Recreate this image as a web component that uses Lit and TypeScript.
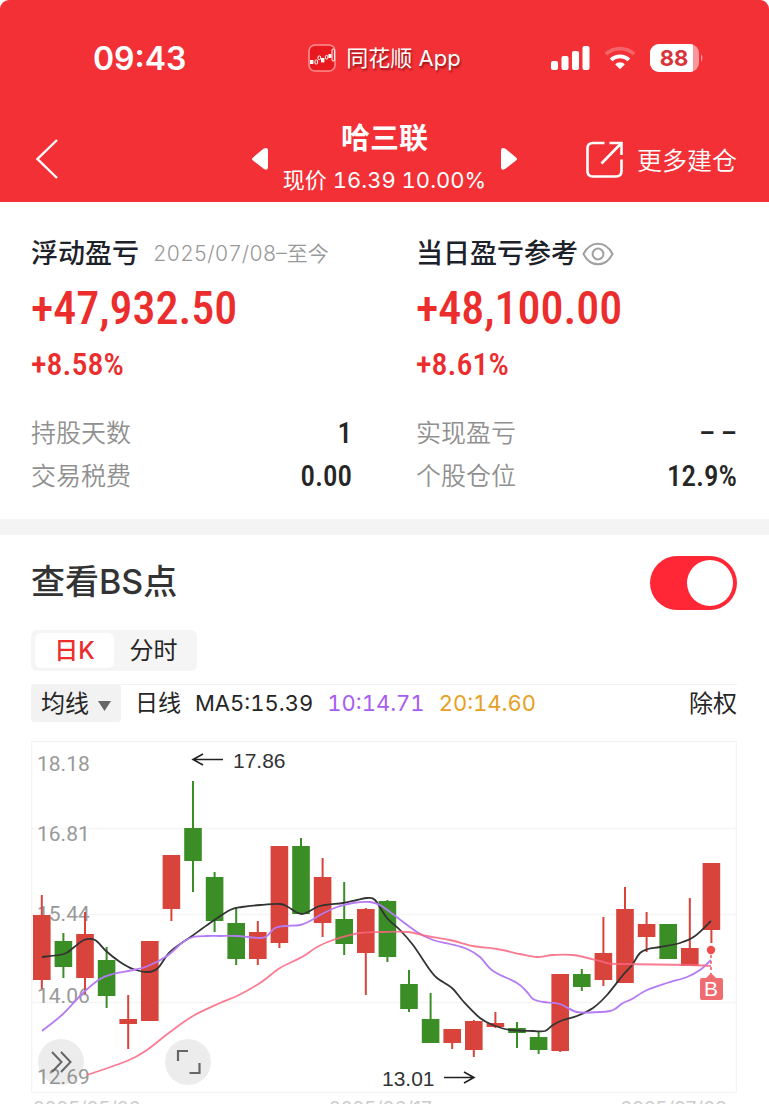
import { LitElement, html, svg, css } from "lit";
import { customElement, property, state } from "lit/decorators.js";
import { classMap } from "lit/directives/class-map.js";

type Point = [number, number];
type Candle = { up: boolean; high: number; top: number; bottom: number; low: number };

const c = (kind: "r" | "g", high: number, top: number, bottom: number, low: number): Candle => ({
  up: kind === "r",
  high,
  top,
  bottom,
  low,
});

const CANDLES: Candle[] = [
  c("r", 154, 174, 239, 248),
  c("g", 192, 200, 226, 237),
  c("r", 171, 193, 237, 253),
  c("g", 206, 219, 255, 267),
  c("r", 254, 278, 283, 308),
  c("r", 200, 200, 280, 280),
  c("r", 114, 114, 168, 180),
  c("g", 40, 87, 120, 151),
  c("g", 131, 136, 180, 191),
  c("g", 166, 182, 218, 224),
  c("r", 180, 191, 218, 224),
  c("r", 105, 105, 202, 207),
  c("g", 97, 105, 173, 173),
  c("r", 117, 136, 182, 196),
  c("g", 141, 178, 203, 214),
  c("r", 167, 168, 212, 254),
  c("g", 159, 160, 216, 221),
  c("g", 229, 243, 268, 271),
  c("g", 252, 278, 302, 302),
  c("r", 288, 288, 302, 308),
  c("r", 279, 280, 309, 316),
  c("r", 271, 282, 286, 287),
  c("g", 281, 287, 292, 307),
  c("g", 291, 296, 309, 313),
  c("r", 233, 233, 310, 311),
  c("g", 228, 233, 246, 250),
  c("r", 176, 212, 239, 245),
  c("r", 146, 168, 242, 242),
  c("r", 171, 183, 196, 211),
  c("g", 183, 183, 218, 218),
  c("r", 157, 207, 225, 225),
  c("r", 122, 122, 189, 202),
];

const MA5: Point[] = [
  [42, 957], [64, 954], [73, 948], [84, 940], [95, 940], [106, 951], [120, 962], [133, 969],
  [148, 972], [158, 968], [170, 952], [192, 936], [210, 923], [230, 910], [242, 907], [260, 905],
  [280, 904], [288, 907], [302, 914], [320, 906], [343, 903], [357, 900], [367, 898], [375, 900],
  [387, 918], [400, 930], [413, 945], [430, 970], [437, 978], [452, 988], [463, 1001], [480, 1018],
  [493, 1025], [510, 1030], [533, 1031], [545, 1031], [553, 1025], [563, 1020], [577, 1016],
  [593, 1008], [607, 995], [623, 975], [632, 965], [640, 953], [648, 949], [660, 947], [680, 943],
  [695, 936], [711, 921],
];

const MA10: Point[] = [
  [42, 1031], [63, 1014], [83, 993], [100, 979], [113, 974], [133, 970], [148, 966], [167, 956],
  [183, 942], [193, 937], [207, 936], [220, 936], [237, 936], [260, 938], [267, 936], [275, 928],
  [285, 926], [300, 925], [310, 921], [320, 915], [337, 907], [353, 903], [370, 902], [380, 905],
  [390, 912], [417, 932], [433, 940], [450, 944], [467, 949], [480, 957], [493, 971], [517, 983],
  [527, 992], [533, 999], [543, 1002], [560, 1004], [577, 1012], [600, 1012], [610, 1011],
  [615, 1009], [623, 1003], [632, 999], [647, 990], [667, 983], [687, 977], [700, 970], [711, 960],
];

const MA20: Point[] = [
  [87, 1075], [127, 1061], [147, 1050], [170, 1032], [193, 1016], [220, 1003], [237, 996],
  [260, 983], [280, 968], [302, 957], [317, 947], [333, 940], [360, 933], [383, 932], [408, 932],
  [427, 936], [450, 940], [473, 946], [497, 949], [520, 954], [537, 957], [553, 955], [573, 955],
  [600, 961], [607, 963], [620, 964], [690, 965], [711, 966],
];

const smooth = (pts: Point[]): string => {
  let d = `M${pts[0][0]} ${pts[0][1]}`;
  for (let i = 0; i < pts.length - 1; i++) {
    const p0 = pts[Math.max(0, i - 1)];
    const p1 = pts[i];
    const p2 = pts[i + 1];
    const p3 = pts[Math.min(pts.length - 1, i + 2)];
    d += `C${p1[0] + (p2[0] - p0[0]) / 6} ${p1[1] + (p2[1] - p0[1]) / 6} ${
      p2[0] - (p3[0] - p1[0]) / 6
    } ${p2[1] - (p3[1] - p1[1]) / 6} ${p2[0]} ${p2[1]}`;
  }
  return d;
};

@customElement("status-bar")
class StatusBar extends LitElement {
  static styles = css`
    :host {
      display: grid;
      grid-template-columns: 1fr auto 1fr;
      align-items: center;
      height: 116px;
      padding: 0 65px;
      color: #fff;
    }
    .time {
      padding-left: 28px;
      font-size: 32px;
      font-weight: 600;
    }
    .app {
      display: flex;
      align-items: center;
      gap: 10px;
      font-size: 22px;
      line-height: 24px;
      text-shadow: 1px 2px 2px rgba(90, 0, 0, 0.6);
    }
    .system {
      display: flex;
      justify-content: flex-end;
      align-items: center;
      gap: 14px;
    }
    svg {
      display: block;
    }
    .battery-text {
      font-size: 22px;
      font-weight: 700;
      fill: #d8343a;
    }
  `;
  render() {
    return html`
      <span class="time">09:43</span>
      <span class="app">
        <svg width="28" height="28" viewBox="0 0 28 28" aria-hidden="true">
          <rect x="1" y="1" width="26" height="26" rx="6" fill="#e8191f" stroke="#ff8f90" stroke-width="1.6" />
          <g fill="#fff">
            <rect x="2" y="16" width="3.4" height="4" />
            <rect x="13" y="14" width="3.4" height="4.4" />
            <rect x="20.4" y="10" width="3" height="4" />
          </g>
          <g fill="none" stroke="#fff">
            <rect x="7" y="16" width="2.6" height="4" rx="1" />
            <rect x="10" y="12" width="2.6" height="3.6" rx="1" />
            <rect x="17.4" y="11.5" width="2.4" height="3.6" rx="1" />
            <rect x="24" y="5" width="2.4" height="12" rx="1" />
          </g>
        </svg>
        <span>同花顺 App</span>
      </span>
      <span class="system">
        <svg width="39" height="26" viewBox="0 0 39 26" fill="#fff" aria-hidden="true">
          <rect x="0" y="16" width="7" height="9" rx="2" />
          <rect x="10.5" y="11" width="7" height="14" rx="2" />
          <rect x="21" y="6" width="7" height="19" rx="2" />
          <rect x="31.5" y="1" width="7" height="24" rx="2" />
        </svg>
        <svg width="32" height="26" viewBox="0 0 34 26" aria-hidden="true">
          <g fill="none" stroke="#fff" stroke-width="4">
            <path d="M2 9 A22 22 0 0 1 32 9" opacity="0.25" />
            <path d="M7.500 15 A14 14 0 0 1 26.500 15" />
          </g>
          <path d="M17 25 L11.800 19.600 A7.600 7.600 0 0 1 22.200 19.600 Z" fill="#fff" />
        </svg>
        <svg width="54" height="28" viewBox="0 0 54 28" role="img" aria-label="88%">
          <clipPath id="cell"><rect width="49" height="28" rx="9" /></clipPath>
          <g clip-path="url(#cell)">
            <rect width="49" height="28" fill="#fff" opacity="0.5" />
            <rect width="43" height="28" fill="#fff" />
          </g>
          <path d="M51 10 Q54 14 51 18 Z" fill="#fff" opacity="0.5" />
          <text class="battery-text" x="24" y="22" text-anchor="middle">88</text>
        </svg>
      </span>
    `;
  }
}

@customElement("stock-nav")
class StockNav extends LitElement {
  static styles = css`
    :host {
      display: grid;
      grid-template-columns: 1fr auto 1fr;
      align-items: center;
      height: 86px;
      padding: 0 32px;
      color: #fff;
    }
    button {
      display: block;
      padding: 0;
      border: 0;
      background: none;
      color: inherit;
    }
    svg {
      display: block;
    }
    .center {
      display: flex;
      align-items: center;
      gap: 14px;
    }
    .stock {
      text-align: center;
    }
    .name {
      margin: 0;
      font-size: 29px;
      font-weight: 700;
      line-height: 42px;
    }
    .price {
      margin: 0;
      font-size: 22px;
      font-variant-numeric: tabular-nums;
      line-height: 40px;
    }
    .more {
      display: flex;
      justify-content: flex-end;
      align-items: center;
      gap: 14px;
      color: inherit;
      font-size: 25px;
      font-weight: 350;
      text-decoration: none;
    }
  `;
  render() {
    return html`
      <button aria-label="返回">
        <svg width="30" height="42" viewBox="0 0 30 42" fill="none" stroke="#fff" stroke-width="2.4">
          <path d="M25 2 L5.500 21 L25 40" />
        </svg>
      </button>
      <div class="center">
        <button aria-label="上一只">
          <svg width="18" height="24" viewBox="0 0 18 24" fill="#fff">
            <path d="M2 10.400 L12.500 1.800 Q17 -0.500 17 4 V20 Q17 24 13 22 L2 13.600 Q0 12 2 10.400 Z" />
          </svg>
        </button>
        <div class="stock">
          <h1 class="name">哈三联</h1>
          <p class="price">现价 16.39 10.00%</p>
        </div>
        <button aria-label="下一只">
          <svg width="18" height="24" viewBox="0 0 18 24" fill="#fff">
            <path d="M16 10.400 L5.500 1.800 Q1 -0.500 1 4 V20 Q1 24 5 22 L16 13.600 Q18 12 16 10.400 Z" />
          </svg>
        </button>
      </div>
      <a class="more" href="#more">
        <svg width="37" height="37" viewBox="0 0 37 37" fill="none" stroke="#fff" stroke-width="2.600" aria-hidden="true">
          <path d="M18.500 2 H7 Q1.500 2 1.500 7.500 V30 Q1.500 35.500 7 35.500 H30 Q35.500 35.500 35.500 30 V18.500" />
          <path d="M23.500 2 H35.500 V14" />
          <path d="M35 2.500 L15.500 22.500" />
        </svg>
        更多建仓
      </a>
    `;
  }
}

@customElement("profit-card")
class ProfitCard extends LitElement {
  @property() heading = "";
  @property() period = "";
  @property() amount = "";
  @property() percent = "";
  @property({ type: Boolean }) eye = false;
  @property({ attribute: false }) rows: [string, string][] = [];

  static styles = css`
    :host {
      display: block;
    }
    .head {
      display: flex;
      align-items: center;
      height: 44px;
    }
    .title {
      margin: 0;
      font-size: 27px;
      font-weight: 500;
      line-height: 44px;
      color: #1d2129;
    }
    .period {
      margin-left: 14px;
      font-size: 21px;
      font-weight: 350;
      font-variant-numeric: tabular-nums;
      line-height: 24px;
      color: #999;
    }
    .eye {
      display: block;
      margin-left: 4px;
      padding: 0;
      border: 0;
      background: none;
    }
    .eye svg {
      display: block;
    }
    .amount,
    .percent {
      margin: 0;
      font-family: "Roboto Condensed", "Liberation Sans Narrow", Roboto, sans-serif;
      font-weight: 500;
      color: #eb2d2d;
    }
    .amount {
      font-size: 46px;
      line-height: 64px;
    }
    .percent {
      font-size: 32px;
      line-height: 48px;
    }
    .rows {
      margin: 24px 0 0;
    }
    .row {
      display: flex;
      justify-content: space-between;
      line-height: 43px;
    }
    dt {
      font-size: 25px;
      font-weight: 350;
      color: #909090;
    }
    dd {
      margin: 0;
      font-family: "Roboto Condensed", "Liberation Sans Narrow", Roboto, sans-serif;
      font-size: 29px;
      font-weight: 500;
      color: #262626;
    }
  `;
  render() {
    return html`
      <div class="head">
        <h2 class="title">${this.heading}</h2>
        ${this.period ? html`<span class="period">${this.period}</span>` : null}
        ${this.eye
          ? html`<button class="eye" aria-label="显示金额">
              <svg width="32" height="24" viewBox="0 0 32 24" fill="none" stroke="#a0a0a0" stroke-width="2">
                <path d="M1.500 12 C5 5 10 1.800 16 1.800 S27 5 30.500 12 C27 19 22 22.200 16 22.200 S5 19 1.500 12 Z" />
                <circle cx="16" cy="12" r="5.400" />
              </svg>
            </button>`
          : null}
      </div>
      <p class="amount">${this.amount}</p>
      <p class="percent">${this.percent}</p>
      <dl class="rows">
        ${this.rows.map(
          ([k, v]) => html`<div class="row"><dt>${k}</dt><dd>${v}</dd></div>`
        )}
      </dl>
    `;
  }
}

@customElement("k-chart")
class KChart extends LitElement {
  static styles = css`
    :host {
      display: block;
      position: relative;
    }
    .plot {
      display: block;
      width: 100%;
      height: auto;
    }
    .axis {
      font-family: Roboto, sans-serif;
      font-size: 21px;
      fill: #999;
    }
    .mark {
      font-family: "Liberation Sans", sans-serif;
      font-size: 21px;
      fill: #333;
    }
    .flag {
      font-family: "Liberation Sans", sans-serif;
      font-size: 21px;
      fill: #fff;
    }
    .tool {
      position: absolute;
      bottom: 8px;
      width: 46px;
      height: 46px;
      padding: 0;
      border: 0;
      border-radius: 50%;
      background: rgba(110, 110, 110, 0.13);
    }
    .tool svg {
      display: block;
    }
    .expand {
      left: 1%;
    }
    .full {
      left: 19%;
    }
  `;
  private candle(k: Candle, i: number) {
    const x = 10.8 + i * 21.6;
    const color = k.up ? "#d8433b" : "#3b8e26";
    return svg`
      <rect x=${x - 1} y=${k.high} width="2" height=${k.low - k.high} fill=${color} />
      <rect x=${x - 8.8} y=${k.top} width="17.600" height=${k.bottom - k.top} fill=${color} />
    `;
  }
  render() {
    return html`
      <svg class="plot" viewBox="0 0 706 352" role="img" aria-label="日K线">
        <rect x="0.500" y="0.500" width="705" height="351" fill="none" stroke="#f3f3f3" stroke-width="1.500" />
        <path d="M0 87.500 H706 M0 173.500 H706 M0 261.500 H706" stroke="#f5f5f5" stroke-width="1.500" />
        <text class="axis" x="6" y="30">18.18</text>
        <text class="axis" x="6" y="100">16.81</text>
        <text class="axis" x="6" y="180">15.44</text>
        <text class="axis" x="6" y="262">14.06</text>
        <text class="axis" x="6" y="343">12.69</text>
        ${CANDLES.map((k, i) => this.candle(k, i))}
        <g transform="translate(-31 -741)" fill="none" stroke-width="1.800">
          <path d=${smooth(MA5)} stroke="#333" />
          <path d=${smooth(MA10)} stroke="#b57bf5" />
          <path d=${smooth(MA20)} stroke="#f9657f" stroke-opacity="0.85" />
        </g>
        <g fill="none" stroke="#222" stroke-width="1.600">
          <path d="M192 18.500 H163 M172 13 L162 18.500 L172 24" />
          <path d="M413 336.500 H442 M433 331 L443 336.500 L433 342" />
        </g>
        <text class="mark" x="202" y="27">17.86</text>
        <text class="mark" x="351" y="345">13.01</text>
        <circle cx="680" cy="209" r="4.200" fill="#ef4b4b" />
        <path d="M680 214 V233" stroke="#ef4b4b" stroke-width="1.400" stroke-dasharray="3 3" />
        <path d="M680 232 L685 237 H690 Q692 237 692 239 V257 Q692 259 690 259 H671 Q669 259 669 257 V239 Q669 237 671 237 H675 Z" fill="#ef6c70" />
        <text class="flag" x="680" y="255" text-anchor="middle">B</text>
      </svg>
      <button class="tool expand" aria-label="展开">
        <svg width="46" height="46" viewBox="0 0 46 46" fill="none" stroke="#666" stroke-width="2">
          <path d="M14 13 L23.500 23 L14 33 M23 13 L32.500 23 L23 33" />
        </svg>
      </button>
      <button class="tool full" aria-label="全屏">
        <svg width="46" height="46" viewBox="0 0 46 46" fill="none" stroke="#666" stroke-width="2.200">
          <path d="M13 22 V12 H23 M34.500 24 V34 H24.500" />
        </svg>
      </button>
    `;
  }
}

@customElement("app-root")
class AppRoot extends LitElement {
  @state() private tab = 0;

  static styles = css`
    :host {
      display: block;
      height: 100vh;
      overflow: hidden;
      background: #fff;
      font-family: Inter, "Noto Sans CJK SC", sans-serif;
      color: #262626;
    }
    .top {
      border-radius: 9px 9px 0 0;
      background: #f23036;
    }
    .summary {
      display: grid;
      grid-template-columns: 1fr 1fr;
      gap: 64px;
      padding: 30px 32px 21px 31px;
      border-bottom: 16px solid #f4f4f4;
    }
    .trend {
      padding: 20px 32px 0 31px;
    }
    .switch-row {
      display: flex;
      justify-content: space-between;
      align-items: center;
      height: 56px;
    }
    .switch-label {
      align-self: flex-start;
      font-size: 34px;
      font-weight: 500;
      line-height: 54px;
      color: #333;
    }
    .toggle {
      appearance: none;
      display: flex;
      justify-content: flex-end;
      width: 87px;
      height: 54px;
      margin: 0;
      padding: 4px;
      border-radius: 27px;
      background: #ff2736;
    }
    .toggle::before {
      content: "";
      width: 46px;
      height: 46px;
      border-radius: 50%;
      background: #fff;
    }
    .toggle:not(:checked) {
      justify-content: flex-start;
      background: #ccc;
    }
    .tabs {
      display: inline-flex;
      margin-top: 19px;
      padding: 3px 4px;
      border-radius: 6px;
      background: #f5f5f5;
    }
    .tab {
      width: 79px;
      height: 35px;
      padding: 0;
      border: 0;
      border-radius: 6px;
      background: none;
      font: inherit;
      font-size: 24px;
      line-height: 35px;
      color: #262626;
    }
    .tab.on {
      background: #fff;
      color: #eb2d2d;
      font-weight: 500;
    }
    .averages {
      display: flex;
      align-items: center;
      gap: 14px;
      margin: 13px 0 19px;
      border-top: 1px solid #f2f2f2;
      font-size: 22px;
      font-variant-numeric: tabular-nums;
      line-height: 37px;
    }
    .picker {
      position: relative;
      display: flex;
    }
    .picker select {
      appearance: none;
      width: 90px;
      height: 37px;
      padding: 0 0 0 10px;
      border: 0;
      border-radius: 3px;
      background: #f2f2f2;
      font: inherit;
      font-size: 24px;
      color: #262626;
    }
    .picker svg {
      position: absolute;
      right: 10px;
      top: 16px;
      pointer-events: none;
    }
    .line-type {
      font-size: 23px;
    }
    .ma10 {
      color: #a95cf0;
    }
    .ma20 {
      color: #e6a023;
    }
    .adjust {
      margin-left: auto;
      padding: 0;
      border: 0;
      background: none;
      font: inherit;
      font-size: 24px;
      color: #262626;
    }
    .dates {
      display: flex;
      justify-content: space-between;
      margin-top: 4px;
      padding: 0 10px 0 2px;
      font-size: 19px;
      line-height: 24px;
      color: #ccc;
    }
  `;

  render() {
    return html`
      <header class="top">
        <status-bar></status-bar>
        <stock-nav></stock-nav>
      </header>
      <section class="summary">
        <profit-card
          heading="浮动盈亏"
          period="2025/07/08–至今"
          amount="+47,932.50"
          percent="+8.58%"
          .rows=${[["持股天数", "1"], ["交易税费", "0.00"]]}
        ></profit-card>
        <profit-card
          heading="当日盈亏参考"
          eye
          amount="+48,100.00"
          percent="+8.61%"
          .rows=${[["实现盈亏", "–\u2009–"], ["个股仓位", "12.9%"]]}
        ></profit-card>
      </section>
      <section class="trend">
        <label class="switch-row">
          <span class="switch-label">查看BS点</span>
          <input class="toggle" type="checkbox" checked />
        </label>
        <div class="tabs">
          ${["日K", "分时"].map(
            (name, i) => html`<button
              class=${classMap({ tab: true, on: this.tab === i })}
              @click=${() => (this.tab = i)}
            >${name}</button>`
          )}
        </div>
        <div class="averages">
          <span class="picker">
            <select aria-label="指标"><option>均线</option></select>
            <svg width="13" height="10" viewBox="0 0 13 10" aria-hidden="true"><path d="M0 0 H13 L6.500 10 Z" fill="#666" /></svg>
          </span>
          <span class="line-type">日线</span>
          <span>MA5:15.39</span>
          <span class="ma10">10:14.71</span>
          <span class="ma20">20:14.60</span>
          <button class="adjust">除权</button>
        </div>
        <k-chart></k-chart>
        <div class="dates">
          <span>2025/05/26</span>
          <span>2025/06/17</span>
          <span>2025/07/09</span>
        </div>
      </section>
    `;
  }
}
